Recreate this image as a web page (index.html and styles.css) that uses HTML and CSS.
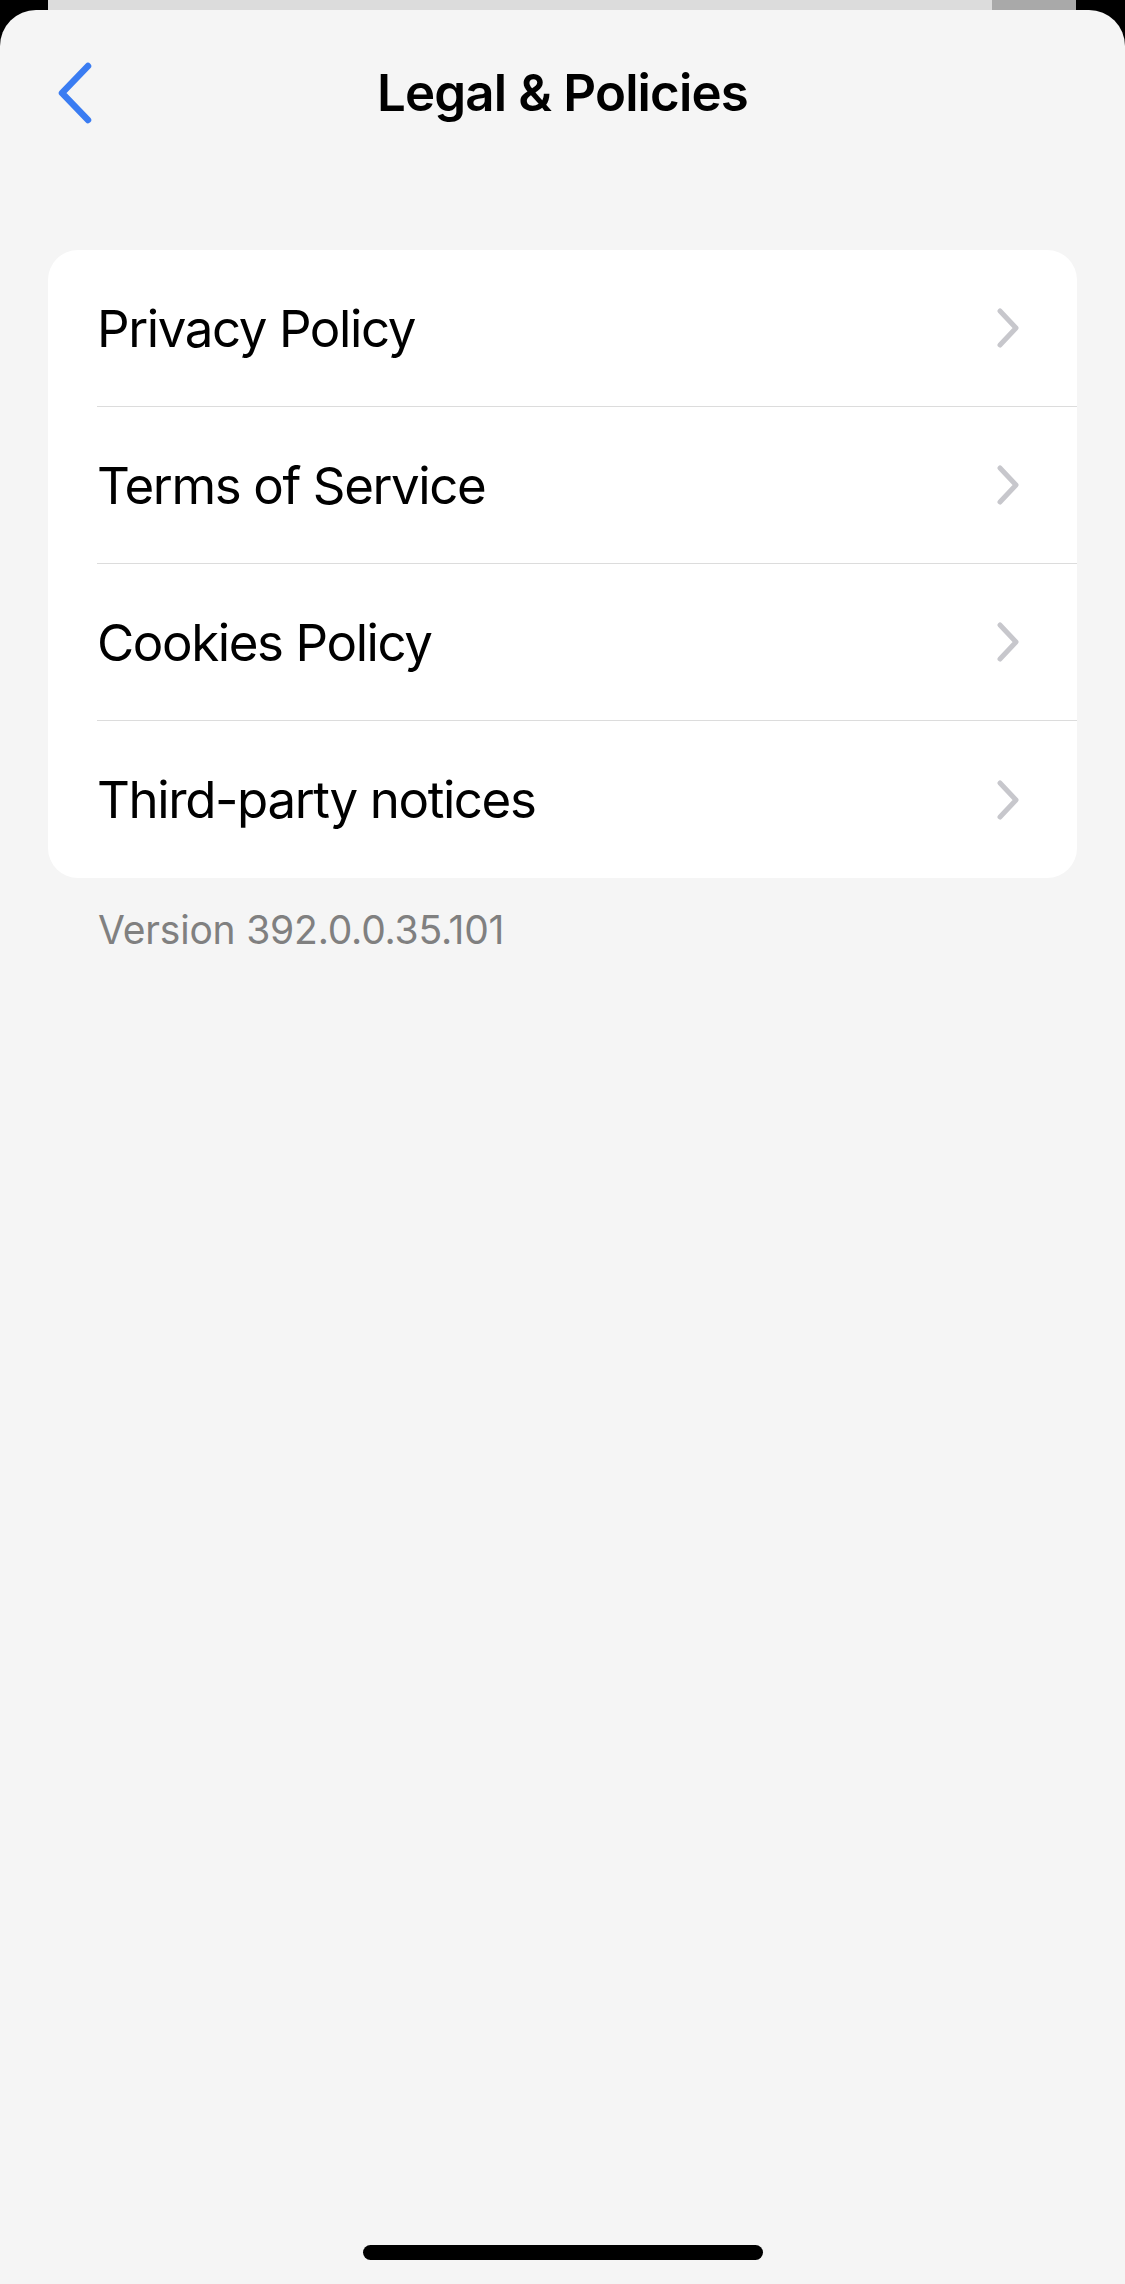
FILE: index.html
```html
<!DOCTYPE html>
<html lang="en">
<head>
<meta charset="utf-8">
<title>Legal &amp; Policies</title>
<link rel="stylesheet" href="styles.css">
</head>
<body>
<div class="peek"></div>
<main class="sheet">
  <header class="nav">
    <div class="nav-left">
      <svg class="back" width="40" height="66" viewBox="0 0 40 66" aria-label="Back">
        <path d="M32 6 L6 33 L32 60" fill="none" stroke="#3a7cf2" stroke-width="6.5" stroke-linecap="round" stroke-linejoin="round"/>
      </svg>
    </div>
    <h1 class="title">Legal &amp; Policies</h1>
    <div class="nav-right"></div>
  </header>

  <section class="card">
    <div class="row"><div class="row-inner"><span class="label">Privacy Policy</span><svg class="chev" width="26" height="44" viewBox="0 0 26 44"><path d="M5 5 L21 22 L5 39" fill="none" stroke="#c7c7cc" stroke-width="5" stroke-linecap="round" stroke-linejoin="round"/></svg></div></div>
    <div class="row"><div class="row-inner"><span class="label">Terms of Service</span><svg class="chev" width="26" height="44" viewBox="0 0 26 44"><path d="M5 5 L21 22 L5 39" fill="none" stroke="#c7c7cc" stroke-width="5" stroke-linecap="round" stroke-linejoin="round"/></svg></div></div>
    <div class="row"><div class="row-inner"><span class="label">Cookies Policy</span><svg class="chev" width="26" height="44" viewBox="0 0 26 44"><path d="M5 5 L21 22 L5 39" fill="none" stroke="#c7c7cc" stroke-width="5" stroke-linecap="round" stroke-linejoin="round"/></svg></div></div>
    <div class="row last"><div class="row-inner"><span class="label">Third-party notices</span><svg class="chev" width="26" height="44" viewBox="0 0 26 44"><path d="M5 5 L21 22 L5 39" fill="none" stroke="#c7c7cc" stroke-width="5" stroke-linecap="round" stroke-linejoin="round"/></svg></div></div>
  </section>

  <p class="version">Version 392.0.0.35.101</p>

  <div class="home-indicator"></div>
</main>
</body>
</html>
```
FILE: styles.css
```css
* { box-sizing: border-box; }

html, body {
  margin: 0;
  padding: 0;
  background: #000;
}

body {
  width: 1125px;
  height: 2284px;
  overflow: hidden;
  font-family: Inter, "Noto Sans", "Liberation Sans", sans-serif;
  color: #000;
}

.peek {
  height: 10px;
  margin: 0 49px 0 48px;
  background: linear-gradient(to right, #dcdcdc 0, #dcdcdc 944px, #a9a9a9 944px);
}

.sheet {
  height: 2274px;
  background: #f5f5f5;
  border-radius: 36px 36px 0 0;
  display: flex;
  flex-direction: column;
}

.nav {
  height: 170px;
  padding-bottom: 5px;
  display: grid;
  grid-template-columns: 1fr auto 1fr;
  align-items: center;
}

.nav-left {
  padding-left: 56px;
  display: flex;
  align-items: center;
}

.back { display: block; }

.title {
  margin: 0;
  font-size: 51px;
  line-height: 1;
  font-weight: 600;
  letter-spacing: -0.85px;
}

.card {
  margin: 70px 48px 0 48px;
  background: #fff;
  border-radius: 30px;
  overflow: hidden;
}

.row {
  height: 157px;
  padding-left: 49px;
  display: flex;
}

.row-inner {
  flex: 1;
  display: flex;
  align-items: center;
  justify-content: space-between;
  padding-right: 56px;
  border-bottom: 1px solid #dcdcdc;
}

.row.last .row-inner { border-bottom: none; }

.label {
  font-size: 51px;
  line-height: 1;
  font-weight: 400;
  letter-spacing: -1.4px;
}

.chev { display: block; }

.version {
  margin: 32px 0 0 98px;
  font-size: 39px;
  line-height: 1;
  color: #808080;
  letter-spacing: -0.2px;
}

.home-indicator {
  margin: auto auto 24px auto;
  width: 400px;
  height: 15px;
  border-radius: 8px;
  background: #000;
}
```
